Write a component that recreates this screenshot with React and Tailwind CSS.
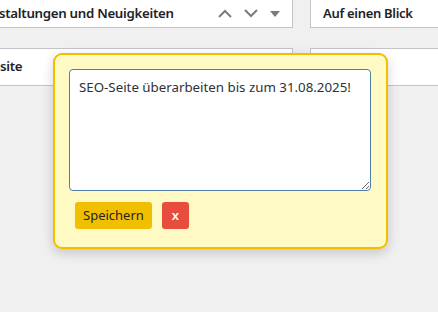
import { useState } from 'react'

const font = { fontFamily: '"Noto Sans", "Open Sans", sans-serif' }

function Chevron({ up }) {
  return (
    <svg width="14" height="9" viewBox="0 0 14 9" fill="none" stroke="#787c82" strokeWidth="2">
      {up ? <path d="M1 8 L7 2 L13 8" /> : <path d="M1 1 L7 7 L13 1" />}
    </svg>
  )
}

export default function App() {
  const [note, setNote] = useState('SEO-Seite überarbeiten bis zum 31.08.2025!')

  return (
    <div className="relative w-[438px] h-[312px] overflow-hidden bg-[#f0f0f1] text-[#1d2327]" style={font}>
      {/* Obere Reihe */}
      <div className="flex gap-[17px]">
        <div className="w-[293px] h-[28px] bg-white border-r border-b border-[#c3c4c7] flex items-center justify-between pr-[12px]">
          <span className="text-[13.3px] font-semibold tracking-[-0.3px] ml-[-1px] whitespace-nowrap">staltungen und Neuigkeiten</span>
          <div className="flex items-center gap-[12px]">
            <Chevron up />
            <Chevron />
            <svg width="10" height="6" viewBox="0 0 10 6"><path d="M0 0 H10 L5 6 Z" fill="#787c82" /></svg>
          </div>
        </div>
        <div className="flex-1 h-[28px] bg-white border-l border-b border-[#c3c4c7] flex items-center pl-[12px]">
          <span className="text-[13px] font-semibold tracking-[-0.3px] whitespace-nowrap">Auf einen Blick</span>
        </div>
      </div>

      {/* Zweite Reihe */}
      <div className="flex gap-[17px] mt-[20px]">
        <div className="w-[293px] h-[38px] bg-white border-t border-r border-b border-[#c3c4c7] flex items-center">
          <span className="text-[13.3px] font-semibold tracking-[-0.3px]">site</span>
        </div>
        <div className="flex-1 h-[38px] bg-white border-t border-l border-b border-[#c3c4c7]" />
      </div>

      {/* Notiz-Popup */}
      <div className="absolute left-[53px] top-[53px] w-[335px] h-[196px] bg-[#fff9c4] border-2 border-[#f0c000] rounded-[9px] shadow-[0_4px_12px_rgba(0,0,0,0.18)] px-[14px] pt-[14px]">
        <textarea
          value={note}
          onChange={(e) => setNote(e.target.value)}
          className="block w-[302px] h-[122px] bg-white border border-[#4f7fa8] rounded-[4px] px-[9px] py-[8px] text-[13.3px] leading-[18px] text-[#2c3338] outline-none resize"
          style={font}
        />
        <div className="flex gap-[10px] mt-[11px] ml-[6px]">
          <button className="h-[27px] px-[8px] bg-[#f0c000] rounded-[3px] text-[13px] text-[#1d2327]" style={font}>Speichern</button>
          <button className="w-[27px] h-[27px] bg-[#e74c3c] rounded-[3px] text-[13px] font-semibold text-white" style={font}>x</button>
        </div>
      </div>
    </div>
  )
}
